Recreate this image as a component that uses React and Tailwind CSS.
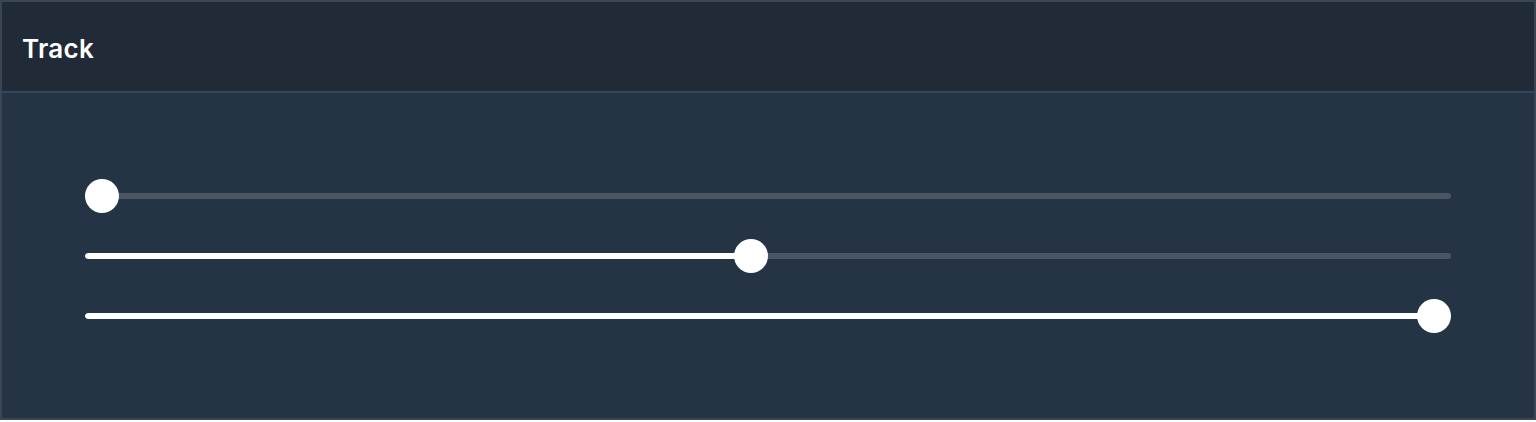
import React, { useState } from 'react';

const Slider = ({ value }) => {
    // thumb travels inside the track, so its centre goes from 17px to (100% - 17px)
    const pos = `calc(17px + (100% - 34px) * ${value / 100})`;
    return (
        <div className="relative h-[34px] w-full flex items-center">
            <div className="relative h-[6px] w-full rounded-full bg-[#4a5664] overflow-hidden">
                <div className="absolute left-0 top-0 h-full rounded-full bg-white" style={{ width: pos }} />
            </div>
            <div className="absolute top-0 h-[34px] w-[34px] -translate-x-1/2 rounded-full bg-white" style={{ left: pos }} />
        </div>
    );
};

export default function App() {
    const [values] = useState([0, 48.7, 100]);

    return (
        <div className="w-full bg-white" style={{ fontFamily: 'Inter, "Noto Sans", sans-serif' }}>
            <div className="h-[420px] border-2 border-[#3a4656] bg-[#253444] flex flex-col">
                {/* Header */}
                <div className="h-[91px] shrink-0 border-b-2 border-[#3a4656] bg-[#212b38] px-5 flex items-center">
                    <h2 className="text-[26px] font-semibold text-white tracking-[0.3px] pt-[3px]">Track</h2>
                </div>

                {/* Body */}
                <div className="flex-1 flex flex-col gap-[26px] pt-[86px] px-[83px]">
                    {values.map((v, i) => (
                        <Slider key={i} value={v} />
                    ))}
                </div>
            </div>
        </div>
    );
}
